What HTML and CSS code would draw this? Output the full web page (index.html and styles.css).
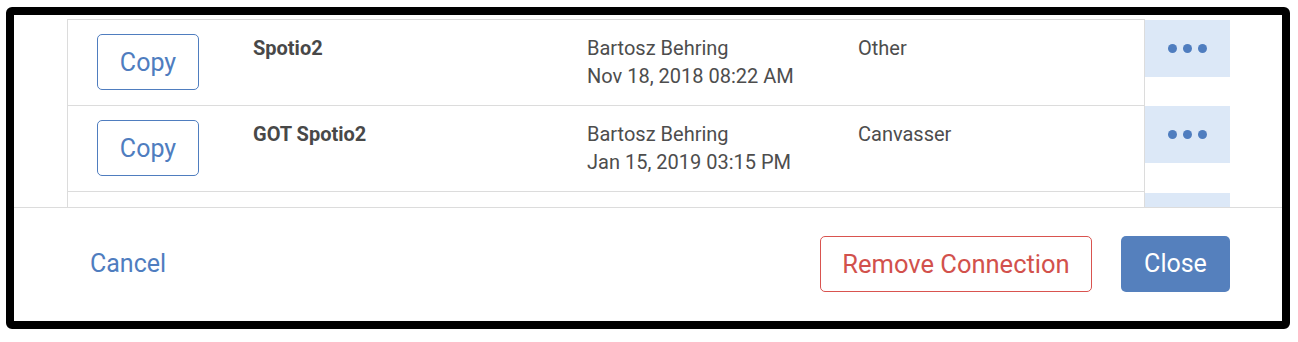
FILE: index.html
```html
<!DOCTYPE html>
<html lang="en">
<head>
<meta charset="utf-8">
<title>Connections</title>
<link rel="stylesheet" href="styles.css">
</head>
<body>
<div class="frame">
  <div class="scroll">
    <div class="rows">
      <div class="row">
        <div class="main">
          <button class="btn-copy">Copy</button>
          <div class="name">Spotio2</div>
          <div class="owner"><div>Bartosz Behring</div><div>Nov 18, 2018 08:22 AM</div></div>
          <div class="type">Other</div>
        </div>
        <div class="actions"><button class="more"><svg width="39" height="9" viewBox="0 0 39 9"><circle cx="4.5" cy="4.5" r="4.5"/><circle cx="19.5" cy="4.5" r="4.5"/><circle cx="34.5" cy="4.5" r="4.5"/></svg></button></div>
      </div>
      <div class="row">
        <div class="main">
          <button class="btn-copy">Copy</button>
          <div class="name">GOT Spotio2</div>
          <div class="owner"><div>Bartosz Behring</div><div>Jan 15, 2019 03:15 PM</div></div>
          <div class="type">Canvasser</div>
        </div>
        <div class="actions"><button class="more"><svg width="39" height="9" viewBox="0 0 39 9"><circle cx="4.5" cy="4.5" r="4.5"/><circle cx="19.5" cy="4.5" r="4.5"/><circle cx="34.5" cy="4.5" r="4.5"/></svg></button></div>
      </div>
      <div class="row">
        <div class="main"></div>
        <div class="actions"><button class="more more-partial"></button></div>
      </div>
    </div>
  </div>
  <div class="footer">
    <button class="btn-cancel">Cancel</button>
    <div class="spacer"></div>
    <button class="btn-remove">Remove Connection</button>
    <button class="btn-close">Close</button>
  </div>
</div>
</body>
</html>
```

FILE: styles.css
```css
* { box-sizing: border-box; }
html, body { margin: 0; padding: 0; background: #ffffff; }
body {
  font-family: Roboto, "Liberation Sans", Arial, sans-serif;
  padding: 7px 8px 0 6px;
}
.frame {
  width: 1284px;
  height: 322px;
  border: 8px solid #000;
  border-radius: 6px;
  background: #fff;
  display: flex;
  flex-direction: column;
  overflow: hidden;
}
.scroll {
  height: 192px;
  overflow: hidden;
  flex: none;
}
.rows {
  padding-left: 53px;
  padding-top: 4px;
}
.row {
  display: flex;
  height: 86px;
}
.main {
  width: 1078px;
  border-left: 1px solid #dcdcdc;
  border-right: 1px solid #dcdcdc;
  border-top: 1px solid #dcdcdc;
  display: grid;
  grid-template-columns: 156px 334px 271px 1fr;
  align-items: start;
  padding: 14px 0 0 29px;
  color: #4d4d4d;
  font-size: 20px;
  line-height: 28px;
}
.btn-copy {
  width: 102px;
  height: 56px;
  border: 1px solid #4f7dbf;
  border-radius: 5px;
  background: #fff;
  color: #4f7dbf;
  font-family: inherit;
  font-size: 25px;
  padding: 0;
}
.name { font-weight: 700; color: #484848; }
.actions {
  width: 85px;
  padding-top: 1px;
}
.more {
  width: 85px;
  height: 57px;
  border: 0;
  padding: 0;
  background: #dce8f7;
  display: flex;
  align-items: center;
  justify-content: center;
}
.more-partial { margin-top: 1px; }
.more svg { fill: #4f7dbf; display: block; }
.footer {
  flex: 1;
  border-top: 1px solid #dcdcdc;
  display: flex;
  align-items: center;
  padding: 0 52px 2px 53px;
}
.spacer { flex: 1; }
.footer button {
  height: 56px;
  font-family: inherit;
  font-size: 25px;
  border-radius: 5px;
  padding: 0 21px;
  border: 1px solid transparent;
  background: #fff;
}
.btn-cancel { color: #4f7dbf; padding-left: 22px !important; }
.btn-remove {
  border-color: #d9534f !important;
  color: #d2514c;
  width: 272px;
  font-size: 25.5px !important;
  margin-right: 29px;
}
.btn-close {
  background: #5580bd !important;
  color: #fff;
  width: 109px;
}
```
